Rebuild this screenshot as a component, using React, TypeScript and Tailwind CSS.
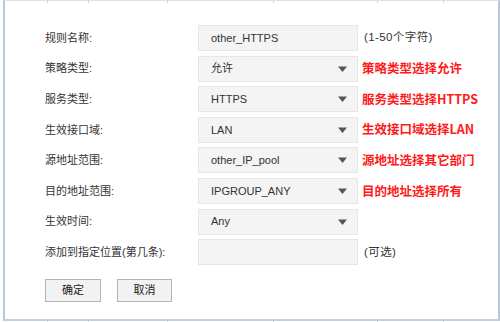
import React from 'react';

type Row = {
    label: string;
    value: string;
    select?: boolean;
    hint?: string;
    note?: string;
};

const rows: Row[] = [
    { label: '规则名称:', value: 'other_HTTPS', hint: '(1-50个字符)' },
    { label: '策略类型:', value: '允许', select: true, note: '策略类型选择允许' },
    { label: '服务类型:', value: 'HTTPS', select: true, note: '服务类型选择HTTPS' },
    { label: '生效接口域:', value: 'LAN', select: true, note: '生效接口域选择LAN' },
    { label: '源地址范围:', value: 'other_IP_pool', select: true, note: '源地址选择其它部门' },
    { label: '目的地址范围:', value: 'IPGROUP_ANY', select: true, note: '目的地址选择所有' },
    { label: '生效时间:', value: 'Any', select: true },
    { label: '添加到指定位置(第几条):', value: '', hint: '(可选)' },
];

// little marks left over from the table columns the shot was cut from
const ticks = [47, 88, 167, 273, 377, 443];

const Caret = () => (
    <svg width="9" height="6" viewBox="0 0 9 6" className="shrink-0">
        <path d="M0 0.5 H9 L4.5 6 Z" fill="#555555" />
    </svg>
);

export default function App() {
    return (
        <div
            className="relative w-[500px] h-[322px] bg-white overflow-hidden"
            style={{ fontFamily: '"Liberation Sans", "Noto Sans CJK SC", sans-serif' }}
        >
            <div className="ml-[3px] w-[497px] h-[321px] border-t border-t-[#e2e2e2] border-l-2 border-r-2 border-b-2 border-l-[#b9c9dd] border-r-[#b9c9dd] border-b-[#c3d2e3] pl-[40px] pt-[24px]">
                <div className="flex flex-col gap-[4.6px]">
                    {rows.map((r) => (
                        <div key={r.label} className="flex items-center h-[26px]">
                            <div className="w-[153px] text-[11px] text-[#333333]">{r.label}</div>
                            <div className="w-[160px] h-[26px] flex items-center justify-between bg-[#f4f4f4] border border-[#e6e6e6] pl-[12px] pr-[10px] text-[11px] text-[#333333]">
                                <span>{r.value}</span>
                                {r.select && <Caret />}
                            </div>
                            {r.hint && (
                                <div className="ml-[6px] text-[11.5px] tracking-[0.4px] text-[#333333]">{r.hint}</div>
                            )}
                            {r.note && (
                                <div
                                    className="ml-[4px] text-[12.5px] font-bold text-[#ff1a1a]"
                                    style={{ fontFamily: '"Noto Sans CJK SC", sans-serif' }}
                                >
                                    {r.note}
                                </div>
                            )}
                        </div>
                    ))}
                </div>
                <div className="flex gap-[16px] mt-[14px]">
                    <button className="w-[56px] h-[23px] bg-[#f2f2f2] border border-[#b4b4b4] text-[11px] text-[#222222]">
                        确定
                    </button>
                    <button className="w-[55px] h-[23px] bg-[#f2f2f2] border border-[#b4b4b4] text-[11px] text-[#222222]">
                        取消
                    </button>
                </div>
            </div>
            {ticks.map((x) => (
                <React.Fragment key={x}>
                    <div className="absolute top-0 w-px h-[3px] bg-[#d6d6d6]" style={{ left: x }} />
                    <div className="absolute top-[319px] w-px h-[3px] bg-[#c3d2e3]" style={{ left: x }} />
                </React.Fragment>
            ))}
        </div>
    );
}
